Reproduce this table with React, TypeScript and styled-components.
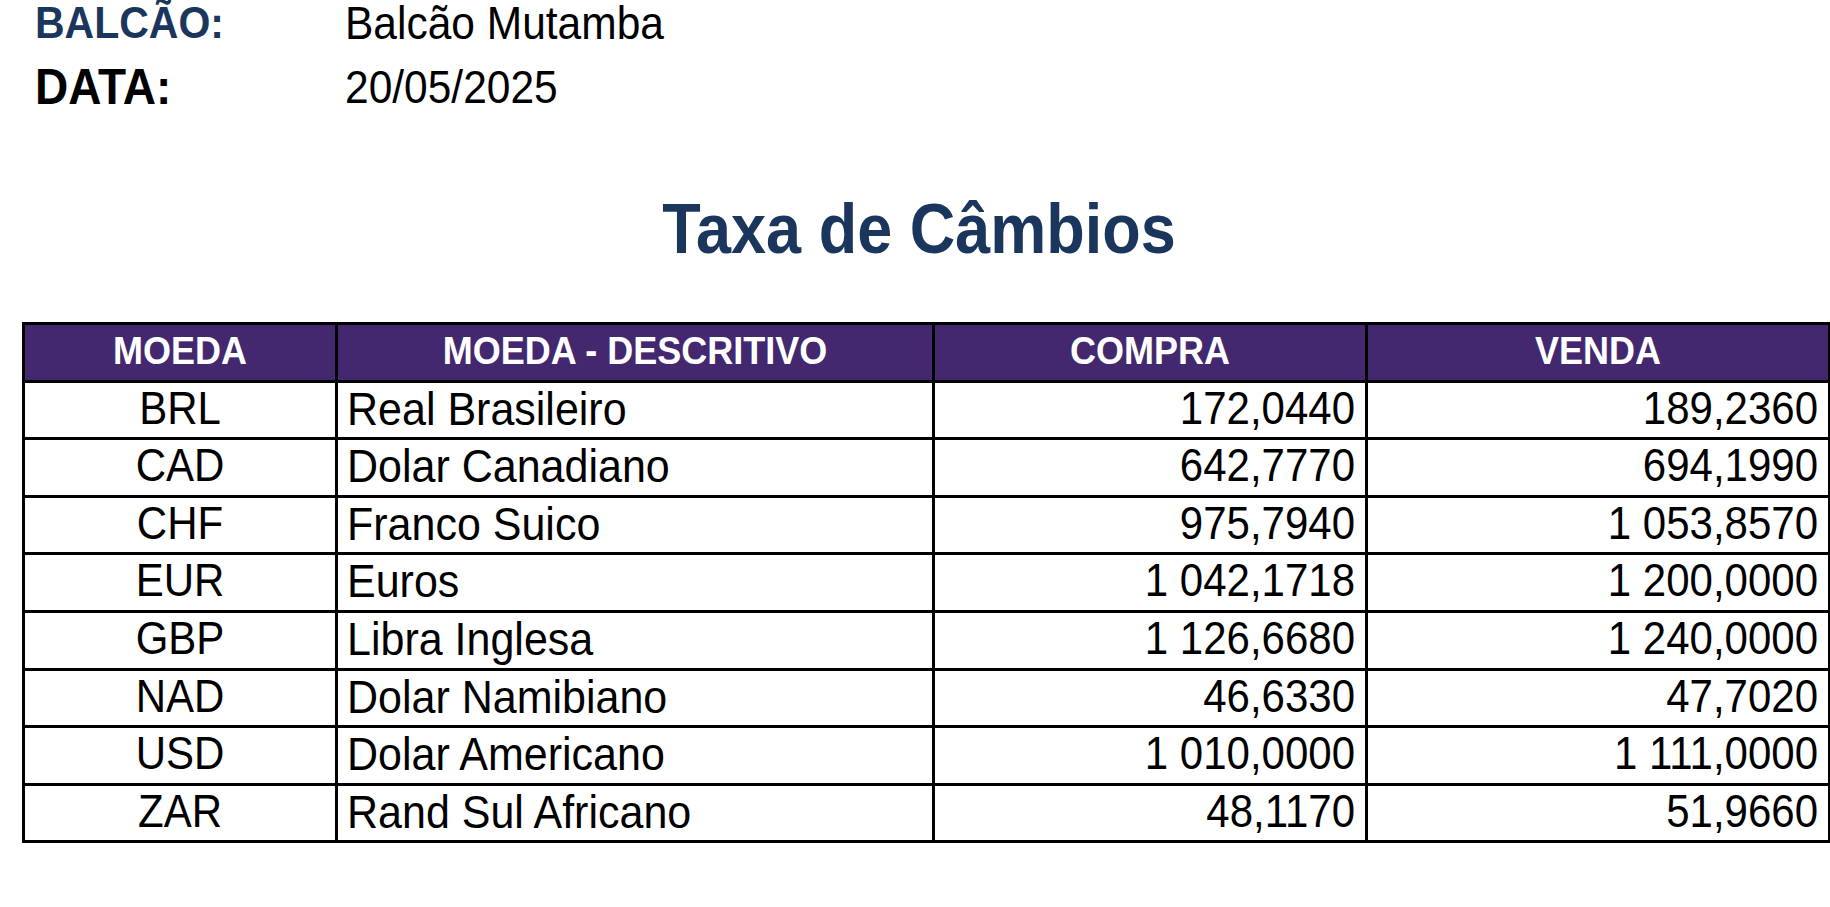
import React from "react";
import styled, { createGlobalStyle } from "styled-components";

const Global = createGlobalStyle`
  html, body { margin: 0; padding: 0; background: #ffffff; }
  body { font-family: "Liberation Sans", Arial, sans-serif; color: #000; }
`;

const Page = styled.div`
  width: 1830px;
  height: 907px;
  box-sizing: border-box;
  padding: 2px 0 0 22px;
  display: flex;
  flex-direction: column;
`;

/* Text is slightly taller than plain Arial in the source; stretch about the baseline */
const Tall = styled.span<{ $size: number; $lh: number; $k?: number }>`
  display: block;
  font-size: ${(p) => p.$size}px;
  line-height: ${(p) => p.$lh}px;
  height: ${(p) => p.$lh}px;
  transform: scaleY(${(p) => p.$k ?? 1.1});
  transform-origin: 50% ${(p) => p.$lh / 2 + 0.3465 * p.$size}px;
`;

const InfoGrid = styled.div`
  display: grid;
  grid-template-columns: 310px auto;
  row-gap: 16px;
  padding-left: 13px;
  margin-top: -2px;
`;

const Label = styled.div<{ $accent?: boolean }>`
  font-weight: 700;
  color: ${(p) => (p.$accent ? "#1b365d" : "#000000")};
`;

const Value = styled.div`
  color: #000;
`;

const Title = styled.h1`
  margin: 83px 0 0 0;
  width: 1794px;
  text-align: center;
  font-weight: 700;
  color: #1b365d;
`;

const Table = styled.table`
  margin-top: 55px;
  width: 1806px;
  border-collapse: collapse;
  table-layout: fixed;
  border: 3px solid #000;
`;

const HeadCell = styled.th`
  background: #43286f;
  color: #ffffff;
  font-weight: 700;
  padding: 0 10px;
  border: 3px solid #000;
  text-align: center;
  white-space: nowrap;
  line-height: 0;
`;

const Cell = styled.td<{ $align: "left" | "center" | "right" }>`
  padding: 0 ${(p) => (p.$align === "left" ? 9 : 10)}px;
  border: 3px solid #000;
  text-align: ${(p) => p.$align};
  white-space: nowrap;
  color: #000;
  line-height: 0;
`;

const rows = [
  ["BRL", "Real Brasileiro", "172,0440", "189,2360"],
  ["CAD", "Dolar Canadiano", "642,7770", "694,1990"],
  ["CHF", "Franco Suico", "975,7940", "1 053,8570"],
  ["EUR", "Euros", "1 042,1718", "1 200,0000"],
  ["GBP", "Libra Inglesa", "1 126,6680", "1 240,0000"],
  ["NAD", "Dolar Namibiano", "46,6330", "47,7020"],
  ["USD", "Dolar Americano", "1 010,0000", "1 111,0000"],
  ["ZAR", "Rand Sul Africano", "48,1170", "51,9660"],
];

const heads = ["MOEDA", "MOEDA - DESCRITIVO", "COMPRA", "VENDA"];

export default function App() {
  return (
    <>
      <Global />
      <Page>
        <InfoGrid>
          <Label $accent>
            <Tall $size={41} $lh={49} $k={1.06}>BALCÃO:</Tall>
          </Label>
          <Value>
            <Tall $size={42.5} $lh={49} $k={1.08}>Balcão Mutamba</Tall>
          </Value>
          <Label>
            <Tall $size={46} $lh={47} $k={1.07}>DATA:</Tall>
          </Label>
          <Value>
            <Tall $size={42.5} $lh={47} $k={1.1}>20/05/2025</Tall>
          </Value>
        </InfoGrid>
        <Title>
          <Tall $size={63} $lh={72} $k={1.13}>Taxa de Câmbios</Tall>
        </Title>
        <Table>
          <colgroup>
            <col style={{ width: 313 }} />
            <col style={{ width: 597 }} />
            <col style={{ width: 433 }} />
            <col style={{ width: 463 }} />
          </colgroup>
          <thead>
            <tr>
              {heads.map((h) => (
                <HeadCell key={h}>
                  <Tall $size={36} $lh={54.6} $k={1.08}>{h}</Tall>
                </HeadCell>
              ))}
            </tr>
          </thead>
          <tbody>
            {rows.map((r) => (
              <tr key={r[0]}>
                {r.map((v, i) => (
                  <Cell key={i} $align={i === 0 ? "center" : i === 1 ? "left" : "right"}>
                    <Tall $size={i === 1 ? 43 : 42} $lh={54.6} $k={1.09}>{v}</Tall>
                  </Cell>
                ))}
              </tr>
            ))}
          </tbody>
        </Table>
      </Page>
    </>
  );
}
